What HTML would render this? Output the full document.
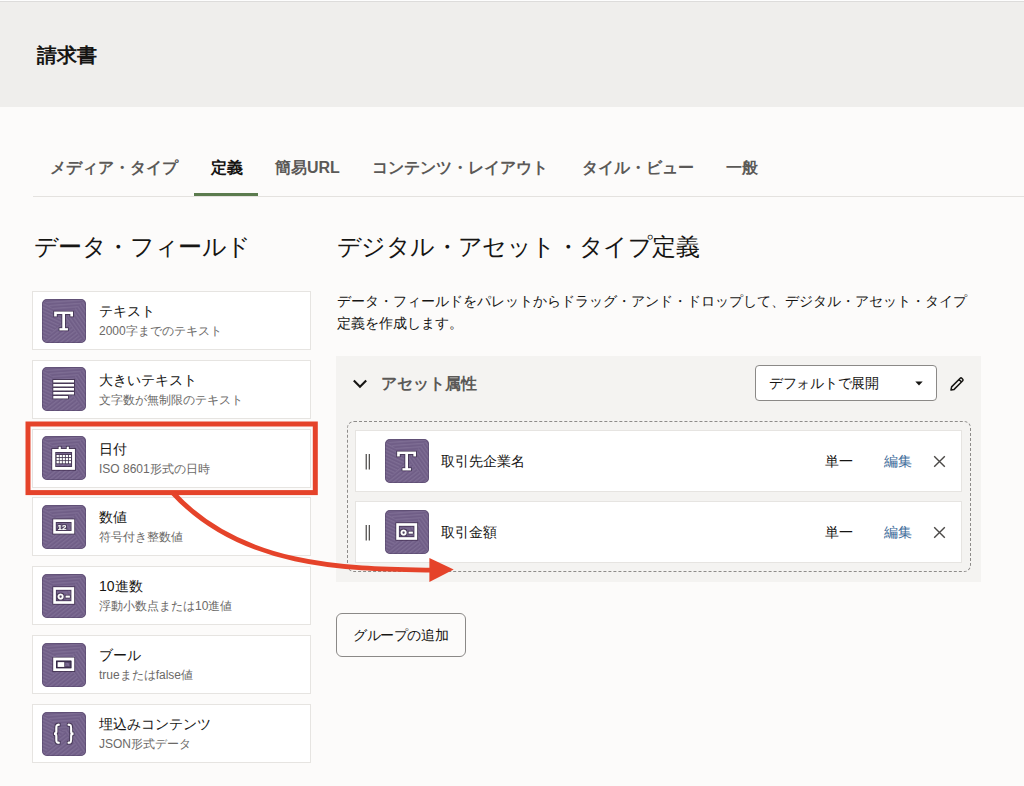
<!DOCTYPE html>
<html><head><meta charset="utf-8">
<style>
*{box-sizing:border-box;margin:0;padding:0}
html,body{width:1024px;height:786px;overflow:hidden;background:#fcfbfa;font-family:"Liberation Sans",sans-serif;color:#161513}
.abs{position:absolute}
#topline{left:0;top:0;width:1024px;height:1px;background:#fdfdfd}
#topline2{left:0;top:1px;width:1024px;height:1px;background:#dddcdb}
#header{left:0;top:2px;width:1024px;height:105px;background:#efeeec}
#title{left:37px;top:42px;font-family:"Liberation Serif",serif;font-weight:bold;font-size:20px;line-height:26px;white-space:nowrap}
#tabline{left:33px;top:196px;width:991px;height:1px;background:#e4e2df}
.tab{position:absolute;top:157px;font-size:16px;line-height:22px;color:#5b5957;font-weight:bold;white-space:nowrap}
.tab.sel{color:#161513}
#tabbar{left:194px;top:193px;width:64px;height:3px;background:#5b7b4e}
h2{position:absolute;font-weight:normal;font-size:24px;line-height:30px;white-space:nowrap;color:#161513;letter-spacing:-0.6px}
.card{position:absolute;left:32px;width:279px;height:59px;background:#fff;border:1px solid #e6e4e1}
.icon{position:absolute;width:44px;height:44px;display:block}
.card .icon{left:9px;top:7px}
.ct{position:absolute;left:66px;top:10px;font-size:14px;line-height:18px;white-space:nowrap;color:#161513}
.cs{position:absolute;left:66px;top:31px;font-size:12px;line-height:16px;white-space:nowrap;color:#6b6967}
#desc{left:337px;top:290px;width:640px;font-size:14px;line-height:22px;color:#161513}
#section{left:336px;top:356px;width:645px;height:226px;background:#f4f3f1}
#sechead{left:381px;top:373px;font-size:16px;line-height:22px;font-weight:bold;color:#5b5957;white-space:nowrap}
#chev{left:352px;top:378px}
#dash{left:347px;top:421px;width:624px;height:151px;border:1px dashed #8e8c8a;border-radius:7px}
.row{position:absolute;left:355px;width:607px;height:62px;background:#fff;border:1px solid #e6e4e1}
.row .icon{left:29px;top:8px}
.handle{position:absolute;left:9px;top:22px}
.xi{position:absolute;left:577px;top:24px;width:13px;height:13px}
.rt{position:absolute;left:85px;top:21px;font-size:14px;line-height:18px;white-space:nowrap}
.r1{position:absolute;left:469px;top:21px;font-size:14px;line-height:18px;white-space:nowrap}
.r2{position:absolute;left:528px;top:21px;font-size:14px;line-height:18px;white-space:nowrap;color:#3d6b99}
#dd{left:755px;top:365px;width:182px;height:36px;border:1px solid #8b8987;border-radius:4px;background:#fff}
#ddt{position:absolute;left:13px;top:8px;letter-spacing:-0.3px;font-size:14px;line-height:18px;white-space:nowrap}
#caret{position:absolute;left:159px;top:15px}
#pencil{left:949px;top:376px}
#btn{left:336px;top:613px;width:130px;height:44px;border:1px solid #8b8987;border-radius:6px;background:#fcfbfa}
#btnt{position:absolute;left:16px;top:12px;letter-spacing:-0.4px;font-size:14px;line-height:18px;white-space:nowrap}
#overlay{position:absolute;left:0;top:0}
</style></head><body>
<svg width="0" height="0" style="position:absolute">
<defs>
<pattern id="sH" patternUnits="userSpaceOnUse" width="3" height="3.2" patternTransform="rotate(-4)"><rect x="0" y="0" width="3" height="1.3" fill="#8e7ea3" fill-opacity="0.45"/></pattern>
<pattern id="sR" patternUnits="userSpaceOnUse" width="3" height="3.2" patternTransform="rotate(55)"><rect x="0" y="0" width="3" height="1.3" fill="#8e7ea3" fill-opacity="0.45"/></pattern>
<pattern id="sB" patternUnits="userSpaceOnUse" width="3" height="3.2" patternTransform="rotate(-38)"><rect x="0" y="0" width="3" height="1.3" fill="#8e7ea3" fill-opacity="0.45"/></pattern>
<pattern id="sL" patternUnits="userSpaceOnUse" width="3" height="3.2" patternTransform="rotate(25)"><rect x="0" y="0" width="3" height="1.3" fill="#8e7ea3" fill-opacity="0.45"/></pattern>
<clipPath id="icl"><rect width="44" height="44" rx="5"/></clipPath>
<filter id="edge" x="-20%" y="-20%" width="140%" height="140%"><feMorphology in="SourceAlpha" operator="dilate" radius="0.5" result="d"/><feFlood flood-color="#2a1e3a" flood-opacity="0.6"/><feComposite in2="d" operator="in"/><feMerge><feMergeNode/><feMergeNode in="SourceGraphic"/></feMerge></filter>
</defs>
</svg>
<div class="abs" id="topline"></div>
<div class="abs" id="topline2"></div>
<div class="abs" id="header"></div>
<div class="abs" id="title">請求書</div>

<div class="tab" style="left:50px">メディア・タイプ</div>
<div class="tab sel" style="left:211px">定義</div>
<div class="tab" style="left:275px">簡易URL</div>
<div class="tab" style="left:372px">コンテンツ・レイアウト</div>
<div class="tab" style="left:582px">タイル・ビュー</div>
<div class="tab" style="left:726px">一般</div>
<div class="abs" id="tabline"></div>
<div class="abs" id="tabbar"></div>

<h2 style="left:34px;top:232px">データ・フィールド</h2>
<h2 style="left:337px;top:232px">デジタル・アセット・タイプ定義</h2>

<div class="card" style="top:291px"><svg class="icon" width="44" height="44" viewBox="0 0 44 44"><rect width="44" height="44" rx="5" fill="#705e87"/><g clip-path="url(#icl)"><path d="M0 0H44L22 20Z" fill="url(#sH)"/><path d="M44 0V44L22 20Z" fill="url(#sR)"/><path d="M0 44H44L22 20Z" fill="url(#sB)"/><path d="M0 0V44L22 20Z" fill="url(#sL)"/></g><rect x="0.4" y="0.4" width="43.2" height="43.2" rx="4.8" fill="none" stroke="#3e2f52" stroke-opacity="0.45" stroke-width="0.8"/><g filter="url(#edge)"><path fill="#fff" d="M12.2 12.7H31V17.2H28.5V14.9H23V29.3H25.9V31.2H17.6V29.3H20.4V14.9H14.7V17.2H12.2Z"/></g></svg><div class="ct">テキスト</div><div class="cs">2000字までのテキスト</div></div>
<div class="card" style="top:360px"><svg class="icon" style="top:6px" width="44" height="44" viewBox="0 0 44 44"><rect width="44" height="44" rx="5" fill="#705e87"/><g clip-path="url(#icl)"><path d="M0 0H44L22 20Z" fill="url(#sH)"/><path d="M44 0V44L22 20Z" fill="url(#sR)"/><path d="M0 44H44L22 20Z" fill="url(#sB)"/><path d="M0 0V44L22 20Z" fill="url(#sL)"/></g><rect x="0.4" y="0.4" width="43.2" height="43.2" rx="4.8" fill="none" stroke="#3e2f52" stroke-opacity="0.45" stroke-width="0.8"/><g filter="url(#edge)"><rect x="11.4" y="13" width="20.6" height="2.3" fill="#fff"/><rect x="11.4" y="17" width="20.6" height="2.3" fill="#fff"/><rect x="11.4" y="21" width="20.6" height="2.3" fill="#fff"/><rect x="11.4" y="25" width="20.6" height="2.3" fill="#fff"/><rect x="11.4" y="29" width="14.6" height="2.3" fill="#fff"/></g></svg><div class="ct">大きいテキスト</div><div class="cs">文字数が無制限のテキスト</div></div>
<div class="card" style="top:429px"><svg class="icon" style="top:6px" width="44" height="44" viewBox="0 0 44 44"><rect width="44" height="44" rx="5" fill="#705e87"/><g clip-path="url(#icl)"><path d="M0 0H44L22 20Z" fill="url(#sH)"/><path d="M44 0V44L22 20Z" fill="url(#sR)"/><path d="M0 44H44L22 20Z" fill="url(#sB)"/><path d="M0 0V44L22 20Z" fill="url(#sL)"/></g><rect x="0.4" y="0.4" width="43.2" height="43.2" rx="4.8" fill="none" stroke="#3e2f52" stroke-opacity="0.45" stroke-width="0.8"/><g filter="url(#edge)"><path fill="none" stroke="#fff" stroke-width="2.8" d="M11.7 14.5H31.5V32.3H11.7Z"/><rect x="16.8" y="10.9" width="1.9" height="4.6" fill="#fff"/><rect x="24.9" y="10.9" width="1.9" height="4.6" fill="#fff"/><rect x="14.75" y="19.0" width="2.05" height="2.05" fill="#fff"/><rect x="14.75" y="22.05" width="2.05" height="2.05" fill="#fff"/><rect x="14.75" y="25.1" width="2.05" height="2.05" fill="#fff"/><rect x="17.8" y="19.0" width="2.05" height="2.05" fill="#fff"/><rect x="17.8" y="22.05" width="2.05" height="2.05" fill="#fff"/><rect x="17.8" y="25.1" width="2.05" height="2.05" fill="#fff"/><rect x="20.85" y="19.0" width="2.05" height="2.05" fill="#fff"/><rect x="20.85" y="22.05" width="2.05" height="2.05" fill="#fff"/><rect x="20.85" y="25.1" width="2.05" height="2.05" fill="#fff"/><rect x="23.9" y="19.0" width="2.05" height="2.05" fill="#fff"/><rect x="23.9" y="22.05" width="2.05" height="2.05" fill="#fff"/><rect x="23.9" y="25.1" width="2.05" height="2.05" fill="#fff"/><rect x="26.95" y="19.0" width="2.05" height="2.05" fill="#fff"/><rect x="26.95" y="22.05" width="2.05" height="2.05" fill="#fff"/><rect x="26.95" y="25.1" width="2.05" height="2.05" fill="#fff"/></g></svg><div class="ct">日付</div><div class="cs">ISO 8601形式の日時</div></div>
<div class="card" style="top:497px"><svg class="icon" width="44" height="44" viewBox="0 0 44 44"><rect width="44" height="44" rx="5" fill="#705e87"/><g clip-path="url(#icl)"><path d="M0 0H44L22 20Z" fill="url(#sH)"/><path d="M44 0V44L22 20Z" fill="url(#sR)"/><path d="M0 44H44L22 20Z" fill="url(#sB)"/><path d="M0 0V44L22 20Z" fill="url(#sL)"/></g><rect x="0.4" y="0.4" width="43.2" height="43.2" rx="4.8" fill="none" stroke="#3e2f52" stroke-opacity="0.45" stroke-width="0.8"/><g filter="url(#edge)"><path fill="none" stroke="#fff" stroke-width="2.4" d="M12.5 15.8H30.9V27.2H12.5Z"/><text x="15.5" y="24.6" font-family="Liberation Sans" font-weight="bold" font-size="8" fill="#fff">12</text></g></svg><div class="ct">数値</div><div class="cs">符号付き整数値</div></div>
<div class="card" style="top:566px"><svg class="icon" width="44" height="44" viewBox="0 0 44 44"><rect width="44" height="44" rx="5" fill="#705e87"/><g clip-path="url(#icl)"><path d="M0 0H44L22 20Z" fill="url(#sH)"/><path d="M44 0V44L22 20Z" fill="url(#sR)"/><path d="M0 44H44L22 20Z" fill="url(#sB)"/><path d="M0 0V44L22 20Z" fill="url(#sL)"/></g><rect x="0.4" y="0.4" width="43.2" height="43.2" rx="4.8" fill="none" stroke="#3e2f52" stroke-opacity="0.45" stroke-width="0.8"/><g filter="url(#edge)"><path fill="none" stroke="#fff" stroke-width="2.5" d="M12.6 14.4H30.8V28.5H12.6Z"/><circle cx="18.6" cy="22.6" r="2.1" fill="none" stroke="#fff" stroke-width="1.6"/><rect x="23.8" y="21.8" width="4" height="1.7" fill="#fff"/></g></svg><div class="ct">10進数</div><div class="cs">浮動小数点または10進値</div></div>
<div class="card" style="top:635px"><svg class="icon" width="44" height="44" viewBox="0 0 44 44"><rect width="44" height="44" rx="5" fill="#705e87"/><g clip-path="url(#icl)"><path d="M0 0H44L22 20Z" fill="url(#sH)"/><path d="M44 0V44L22 20Z" fill="url(#sR)"/><path d="M0 44H44L22 20Z" fill="url(#sB)"/><path d="M0 0V44L22 20Z" fill="url(#sL)"/></g><rect x="0.4" y="0.4" width="43.2" height="43.2" rx="4.8" fill="none" stroke="#3e2f52" stroke-opacity="0.45" stroke-width="0.8"/><g filter="url(#edge)"><path fill="none" stroke="#fff" stroke-width="2.8" d="M12.7 16.2H30.7V26.6H12.7Z"/><rect x="14.6" y="18.2" width="14.4" height="6.6" fill="none" stroke="#2e2240" stroke-width="0.9"/><rect x="15.8" y="19.2" width="6.3" height="4.7" fill="#fff"/></g></svg><div class="ct">ブール</div><div class="cs">trueまたはfalse値</div></div>
<div class="card" style="top:704px"><svg class="icon" width="44" height="44" viewBox="0 0 44 44"><rect width="44" height="44" rx="5" fill="#705e87"/><g clip-path="url(#icl)"><path d="M0 0H44L22 20Z" fill="url(#sH)"/><path d="M44 0V44L22 20Z" fill="url(#sR)"/><path d="M0 44H44L22 20Z" fill="url(#sB)"/><path d="M0 0V44L22 20Z" fill="url(#sL)"/></g><rect x="0.4" y="0.4" width="43.2" height="43.2" rx="4.8" fill="none" stroke="#3e2f52" stroke-opacity="0.45" stroke-width="0.8"/><g filter="url(#edge)"><path fill="none" stroke="#fff" stroke-width="1.9" stroke-linecap="round" d="M16.8 12.8C14.3 12.8 14.3 14 14.3 16V19.5C14.3 21 13.6 21.8 12 21.8C13.6 21.8 14.3 22.6 14.3 24V27.5C14.3 29.6 14.3 30.8 16.8 30.8"/><path fill="none" stroke="#fff" stroke-width="1.9" stroke-linecap="round" d="M26.6 12.8C29.1 12.8 29.1 14 29.1 16V19.5C29.1 21 29.8 21.8 31.4 21.8C29.8 21.8 29.1 22.6 29.1 24V27.5C29.1 29.6 29.1 30.8 26.6 30.8"/></g></svg><div class="ct">埋込みコンテンツ</div><div class="cs">JSON形式データ</div></div>

<div class="abs" id="desc">データ・フィールドをパレットからドラッグ・アンド・ドロップして、デジタル・アセット・タイプ定義を作成します。</div>

<div class="abs" id="section"></div>
<svg class="abs" id="chev" width="16" height="12" viewBox="0 0 16 12"><path d="M1.8 2.5L8 8.8L14.2 2.5" fill="none" stroke="#161513" stroke-width="2.1"/></svg>
<div class="abs" id="sechead">アセット属性</div>
<div class="abs" id="dd"><div id="ddt">デフォルトで展開</div><svg id="caret" width="8" height="5" viewBox="0 0 8 5"><path d="M0.3 0.6H7.7L4 4.6Z" fill="#161513"/></svg></div>
<svg class="abs" id="pencil" width="16" height="16" viewBox="0 0 16 16"><path d="M2 14L2.6 10.9L11.2 2.3Q12 1.5 12.8 2.3L13.7 3.2Q14.5 4 13.7 4.8L5.1 13.4Z M10 3.5L12.5 6" fill="none" stroke="#161513" stroke-width="1.5" stroke-linejoin="round"/></svg>
<div class="abs" id="dash"></div>
<div class="row" style="top:430px"><svg class="handle" width="6" height="17" viewBox="0 0 6 17"><rect x="0.6" y="1" width="1.3" height="15.5" fill="#555351"/><rect x="3.7" y="1" width="1.3" height="15.5" fill="#555351"/></svg><svg class="icon" width="44" height="44" viewBox="0 0 44 44"><rect width="44" height="44" rx="5" fill="#705e87"/><g clip-path="url(#icl)"><path d="M0 0H44L22 20Z" fill="url(#sH)"/><path d="M44 0V44L22 20Z" fill="url(#sR)"/><path d="M0 44H44L22 20Z" fill="url(#sB)"/><path d="M0 0V44L22 20Z" fill="url(#sL)"/></g><rect x="0.4" y="0.4" width="43.2" height="43.2" rx="4.8" fill="none" stroke="#3e2f52" stroke-opacity="0.45" stroke-width="0.8"/><g filter="url(#edge)"><path fill="#fff" d="M12.2 12.7H31V17.2H28.5V14.9H23V29.3H25.9V31.2H17.6V29.3H20.4V14.9H14.7V17.2H12.2Z"/></g></svg><div class="rt">取引先企業名</div><div class="r1">単一</div><div class="r2">編集</div><svg class="xi" width="14" height="14" viewBox="0 0 14 14"><path d="M1.3 1.3L12.7 12.7M12.7 1.3L1.3 12.7" stroke="#4a4846" stroke-width="1.5" fill="none"/></svg></div>
<div class="row" style="top:501px"><svg class="handle" width="6" height="17" viewBox="0 0 6 17"><rect x="0.6" y="1" width="1.3" height="15.5" fill="#555351"/><rect x="3.7" y="1" width="1.3" height="15.5" fill="#555351"/></svg><svg class="icon" width="44" height="44" viewBox="0 0 44 44"><rect width="44" height="44" rx="5" fill="#705e87"/><g clip-path="url(#icl)"><path d="M0 0H44L22 20Z" fill="url(#sH)"/><path d="M44 0V44L22 20Z" fill="url(#sR)"/><path d="M0 44H44L22 20Z" fill="url(#sB)"/><path d="M0 0V44L22 20Z" fill="url(#sL)"/></g><rect x="0.4" y="0.4" width="43.2" height="43.2" rx="4.8" fill="none" stroke="#3e2f52" stroke-opacity="0.45" stroke-width="0.8"/><g filter="url(#edge)"><path fill="none" stroke="#fff" stroke-width="2.5" d="M12.6 14.4H30.8V28.5H12.6Z"/><circle cx="18.6" cy="22.6" r="2.1" fill="none" stroke="#fff" stroke-width="1.6"/><rect x="23.8" y="21.8" width="4" height="1.7" fill="#fff"/></g></svg><div class="rt">取引金額</div><div class="r1">単一</div><div class="r2">編集</div><svg class="xi" width="14" height="14" viewBox="0 0 14 14"><path d="M1.3 1.3L12.7 12.7M12.7 1.3L1.3 12.7" stroke="#4a4846" stroke-width="1.5" fill="none"/></svg></div>

<div class="abs" id="btn"><div id="btnt">グループの追加</div></div>

<svg id="overlay" width="1024" height="786" viewBox="0 0 1024 786">
<rect x="28" y="424" width="287.3" height="68.6" fill="none" stroke="#e5432a" stroke-width="5"/>
<path d="M173 493C243.3 569.2 351.2 568.9 432 570.2" fill="none" stroke="#e5432a" stroke-width="4.8"/>
<path d="M429.4 558L453.7 569.4L429.4 581.9Z" fill="#e5432a"/>
</svg>
</body></html>
